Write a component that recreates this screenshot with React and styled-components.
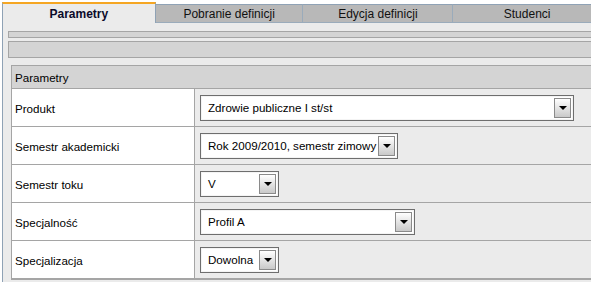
import styled, { createGlobalStyle } from 'styled-components'

const GlobalStyle = createGlobalStyle`
    html, body {
        margin: 0;
        padding: 0;
        background: #ffffff;
        overflow: hidden;
    }

    body {
        font-family: "Liberation Sans", Arial, sans-serif;
        font-size: 11.6px;
        color: #000;
    }
`

const Page = styled.div`
    width: 600px;
    padding: 2px 0 0 2px;
`

const TabBar = styled.div`
    display: flex;
    align-items: flex-end;
    height: 21px;
`

const Tab = styled.div`
    box-sizing: border-box;
    width: ${(p) => p.$width}px;
    display: flex;
    align-items: center;
    justify-content: center;
    font-size: 12px;
    ${(p) =>
        p.$active
            ? `
        height: 21px;
        background: #ebebeb;
        border-top: 2px solid #f5a623;
        border-left: 1px solid #8fa2b5;
        border-right: 1px solid #8fa2b5;
        font-weight: bold;
        color: #0a0a2a;
        padding-top: 1px;
    `
            : `
        height: 19px;
        background: #b8b8b8;
        border-top: 1px solid #8fa2b5;
        border-right: 1px solid #9aabbb;
        border-bottom: 1px solid #9aabbb;
        color: #111;
    `}
`

const Content = styled.div`
    box-sizing: border-box;
    background: #ebebeb;
    border-left: 1px solid #8fa2b5;
    padding: 8px 0 10px 5px;
    display: flex;
    flex-direction: column;
    gap: 3px;
`

const Bar = styled.div`
    height: ${(p) => p.$height}px;
    background: #d4d4d4;
    border: 1px solid #a5a5a5;
    border-right: none;
`

const Panel = styled.div`
    margin: 4px 0 0 3px;
    border: 1px solid #a5a5a5;
    border-right: none;
    background: #ebebeb;
`

const PanelHeader = styled.div`
    height: 22px;
    display: flex;
    align-items: center;
    padding-left: 3px;
    background: #d4d4d4;
    border-bottom: 1px solid #a5a5a5;
`

const Row = styled.div`
    display: grid;
    grid-template-columns: 183px 1fr;
    height: 37px;
    border-bottom: 1px solid #a5a5a5;
`

const Label = styled.div`
    display: flex;
    align-items: center;
    padding: 1px 0 0 3px;
    background: #ffffff;
    border-right: 1px solid #a5a5a5;
`

const Value = styled.div`
    display: flex;
    align-items: center;
    padding-left: 5px;
`

const Select = styled.div`
    box-sizing: border-box;
    width: ${(p) => p.$width}px;
    height: 26px;
    display: flex;
    align-items: center;
    justify-content: space-between;
    background: #ffffff;
    border: 1px solid #6e6e6e;
    box-shadow: inset 0 0 0 1px #f4f4f4;
    padding: 0 2px 0 7px;
    white-space: nowrap;
`

const DropButton = styled.div`
    box-sizing: border-box;
    flex: none;
    width: 17px;
    height: 20px;
    border: 1px solid #8a8a8a;
    background: linear-gradient(#ffffff, #c9c9c9);
    display: flex;
    align-items: center;
    justify-content: center;
    margin-left: 2px;
`

const Arrow = styled.span`
    width: 0;
    height: 0;
    border-left: 4px solid transparent;
    border-right: 4px solid transparent;
    border-top: 4px solid #000;
    margin-top: 1px;
`

const tabs = [
    { label: 'Parametry', width: 155, active: true },
    { label: 'Pobranie definicji', width: 149 },
    { label: 'Edycja definicji', width: 151 },
    { label: 'Studenci', width: 150 },
]

const fields = [
    { label: 'Produkt', value: 'Zdrowie publiczne I st/st', width: 374 },
    { label: 'Semestr akademicki', value: 'Rok 2009/2010, semestr zimowy', width: 198 },
    { label: 'Semestr toku', value: 'V', width: 79 },
    { label: 'Specjalność', value: 'Profil A', width: 215 },
    { label: 'Specjalizacja', value: 'Dowolna', width: 79 },
]

export default function App() {
    return (
        <Page>
            <GlobalStyle />
            <TabBar>
                {tabs.map((t) => (
                    <Tab key={t.label} $width={t.width} $active={t.active}>
                        {t.label}
                    </Tab>
                ))}
            </TabBar>
            <Content>
                <Bar $height={5} />
                <Bar $height={15} />
                <Panel>
                    <PanelHeader>Parametry</PanelHeader>
                    {fields.map((f) => (
                        <Row key={f.label}>
                            <Label>{f.label}</Label>
                            <Value>
                                <Select $width={f.width}>
                                    <span>{f.value}</span>
                                    <DropButton>
                                        <Arrow />
                                    </DropButton>
                                </Select>
                            </Value>
                        </Row>
                    ))}
                </Panel>
            </Content>
        </Page>
    )
}
